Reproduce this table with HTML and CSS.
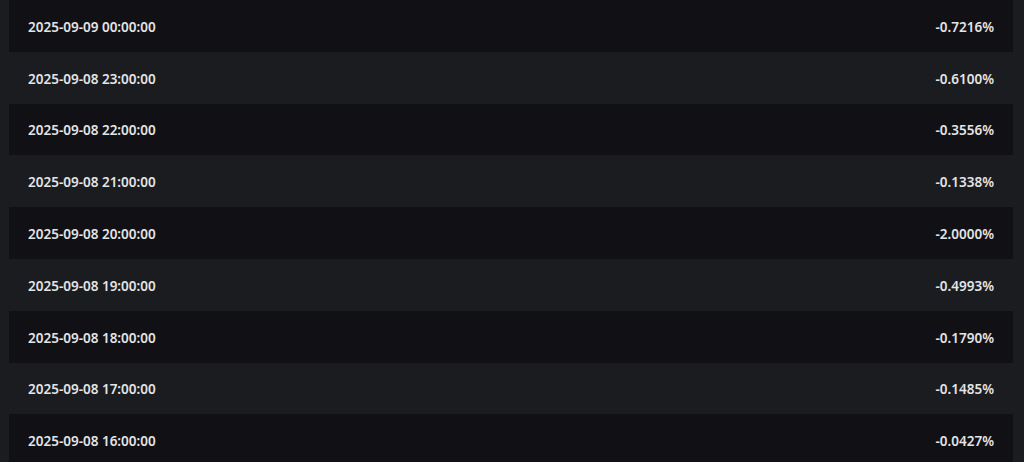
FILE: index.html
```html
<!DOCTYPE html>
<html>
<head>
<meta charset="utf-8">
<link rel="stylesheet" href="styles.css">
</head>
<body>
<div class="table">
  <div class="row"><span class="time">2025-09-09 00:00:00</span><span class="rate">-0.7216%</span></div>
  <div class="row"><span class="time">2025-09-08 23:00:00</span><span class="rate">-0.6100%</span></div>
  <div class="row"><span class="time">2025-09-08 22:00:00</span><span class="rate">-0.3556%</span></div>
  <div class="row"><span class="time">2025-09-08 21:00:00</span><span class="rate">-0.1338%</span></div>
  <div class="row"><span class="time">2025-09-08 20:00:00</span><span class="rate">-2.0000%</span></div>
  <div class="row"><span class="time">2025-09-08 19:00:00</span><span class="rate">-0.4993%</span></div>
  <div class="row"><span class="time">2025-09-08 18:00:00</span><span class="rate">-0.1790%</span></div>
  <div class="row"><span class="time">2025-09-08 17:00:00</span><span class="rate">-0.1485%</span></div>
  <div class="row"><span class="time">2025-09-08 16:00:00</span><span class="rate">-0.0427%</span></div>
</div>
</body>
</html>
```
FILE: styles.css
```css
html, body {
  margin: 0;
  padding: 0;
  background: #1a1c1f;
  overflow: hidden;
}
.table {
  display: flex;
  flex-direction: column;
  padding: 0 11px 0 9px;
}
.row {
  height: 51.8px;
  display: flex;
  align-items: center;
  justify-content: space-between;
  padding: 2px 19px 0;
  font-family: "Noto Sans", sans-serif;
  font-size: 13.5px;
  font-weight: 600;
  color: #e4e4e6;
  box-sizing: border-box;
}
.row:nth-child(odd) {
  background: #111115;
}
```
